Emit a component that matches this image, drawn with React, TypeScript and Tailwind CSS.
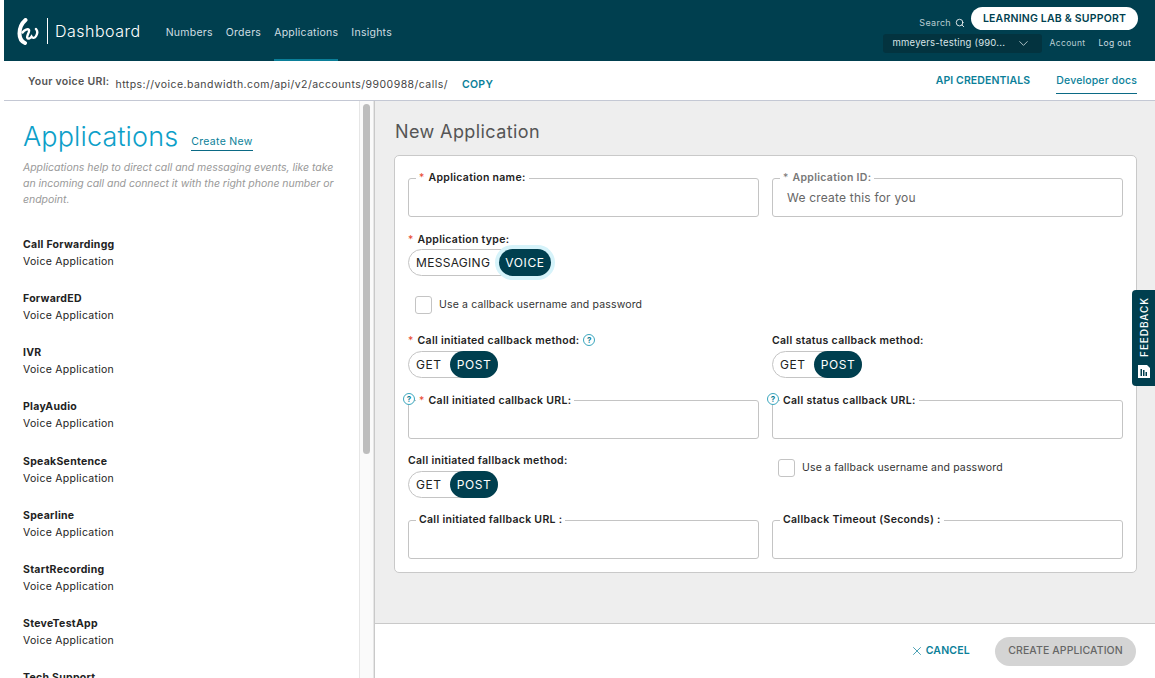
import { ChevronDown, Search, X } from "lucide-react";

const apps = [
  "Call Forwardingg",
  "ForwardED",
  "IVR",
  "PlayAudio",
  "SpeakSentence",
  "Spearline",
  "StartRecording",
  "SteveTestApp",
  "Tech Support",
];

function Logo() {
  return (
    <svg width="22" height="27" viewBox="0 0 22 27" fill="none" stroke="#fff" strokeLinecap="round">
      <path d="M8.500 2C4.500 5.500 2.500 10.500 2.500 15.500c0 5 2 8 5.500 9.500" strokeWidth="4" />
      <path d="M5.500 14.500c2-3 5.500-4 6.500-2.500 1 1.800-2.500 5.500-1.800 7.500.6 1.800 3 1.300 4.300-.8 1 1.800 3.300 1.600 4.600-.7 1.500-2.500 1.200-5.500-.1-7" strokeWidth="2.400" />
    </svg>
  );
}

function Help({ className }: { className?: string }) {
  return (
    <span
      className={`flex h-[12px] w-[12px] items-center justify-center rounded-full border border-[#3aa6bd] bg-white text-[8px] font-bold leading-none text-[#0b7f99] ${className ?? ""}`}
    >
      ?
    </span>
  );
}

function Req() {
  return <span className="mr-[4px] font-normal text-[#e8492f]">*</span>;
}

function Field({
  label,
  required,
  help,
  placeholder,
  muted,
}: {
  label: string;
  required?: boolean;
  help?: boolean;
  placeholder?: string;
  muted?: boolean;
}) {
  return (
    <div className="relative">
      {help && <Help className="absolute left-[-5px] top-0 z-10" />}
      <fieldset className="h-[46px] rounded-[3px] border border-[#c4c4c4] bg-white">
        <legend
          className={`ml-[7px] h-[14px] px-[3px] text-[10.5px] font-semibold leading-[14px] tracking-[0.3px] ${muted ? "text-[#777]" : "text-[#222]"} ${help ? "translate-y-px" : ""}`}
        >
          {required && (muted ? <span className="mr-[4px] font-normal text-[#777]">*</span> : <Req />)}
          {label}
        </legend>
        {placeholder && (
          <div className="px-[14px] pt-[5px] text-[12px] leading-[16px] tracking-[0.2px] text-[#666]">{placeholder}</div>
        )}
      </fieldset>
    </div>
  );
}

function Toggle({ left, right, wide }: { left: string; right: string; wide?: boolean }) {
  return (
    <div
      className={`flex h-[27px] items-center rounded-full border border-[#c4c4c4] bg-white text-[12px] ${wide ? "w-[143px] tracking-[0.3px]" : "w-[90px] tracking-[0.6px]"}`}
    >
      <span className={`pt-px pl-[7px] text-[#222] ${wide ? "w-[90px]" : "w-[41px]"}`}>{left}</span>
      <span
        className={`-my-px -mr-px flex h-[27px] flex-1 items-center justify-center rounded-full bg-[#003f4f] pt-px tracking-[0.6px] text-white ${wide ? "shadow-[0_0_0_4px_#d6f3fa]" : ""}`}
      >
        {right}
      </span>
    </div>
  );
}

function Check({ label }: { label: string }) {
  return (
    <label className="flex items-center gap-[7px] text-[10.5px] tracking-[0.15px] text-[#333]">
      <span className="h-[18px] w-[17px] rounded-[3px] border border-[#c4c4c4] bg-white" />
      {label}
    </label>
  );
}

function MethodLabel({ children }: { children: React.ReactNode }) {
  return <div className="h-[14px] text-[10.5px] font-semibold leading-[14px] tracking-[0.3px] text-[#222]">{children}</div>;
}

export default function App() {
  return (
    <div className="relative flex h-[678px] w-[1155px] flex-col overflow-hidden bg-white pl-[4px] font-['Inter',sans-serif]">
      <header className="flex h-[61px] shrink-0 bg-[#003f4f] text-white">
        <div className="flex items-center pl-[13px] pt-[1px]">
          <Logo />
          <div className="ml-[8px] h-[26px] w-px bg-white" />
          <span className="ml-[7px] text-[16px] font-light tracking-[0.5px]">Dashboard</span>
        </div>
        <nav className="ml-[25px] flex gap-[13px] text-[10.5px] tracking-[0.25px] text-[#cfdde1]">
          {["Numbers", "Orders", "Applications", "Insights"].map((n) => (
            <a
              key={n}
              className={`flex h-[61px] items-center border-b-2 pt-[7px] ${n === "Applications" ? "border-[#0b7f99]" : "border-transparent"}`}
            >
              {n}
            </a>
          ))}
        </nav>
        <div className="ml-auto flex flex-col items-end pr-[17px] pt-[7px]">
          <div className="flex items-start">
            <span className="mt-[10px] text-[9px] leading-[12px] tracking-[0.3px] text-[#b9cdd2]">Search</span>
            <Search size={10} className="ml-[4px] mt-[11px] text-white" />
            <button className="ml-[6px] h-[23px] w-[167px] rounded-full bg-white text-[10.5px] font-semibold tracking-[0.2px] text-[#003f4f]">
              LEARNING LAB &amp; SUPPORT
            </button>
          </div>
          <div className="mt-[4px] flex items-center">
            <div className="flex h-[19px] w-[159px] items-center justify-between rounded-[3px] bg-[#03333f] pl-[10px] pr-[11px] text-[9.5px] tracking-[0.2px] text-[#d8e4e7]">
              mmeyers-testing (990...
              <ChevronDown size={15} strokeWidth={1.25} />
            </div>
            <span className="ml-[8px] text-[8.500px] tracking-[0.35px] text-[#b9cdd2]">Account</span>
            <span className="ml-[13px] mr-[7px] text-[8.500px] tracking-[0.3px] text-[#cfdde1]">Log out</span>
          </div>
        </div>
      </header>

      <div className="flex h-[40px] shrink-0 items-start border-b border-[#c4c8d4] pl-[24px] pr-[18px] text-[#444]">
        <span className="mt-[14px] text-[10.5px] leading-[14px] font-semibold tracking-[0.3px] text-[#555]">Your voice URI:</span>
        <span className="ml-[6px] mt-[17px] text-[10.5px] leading-[14px] tracking-[0.46px]">https://voice.bandwidth.com/api/v2/accounts/9900988/calls/</span>
        <span className="ml-[14px] mt-[17px] text-[10.5px] leading-[14px] font-semibold tracking-[0.3px] text-[#0b7f99]">COPY</span>
        <span className="ml-auto mt-[13px] text-[10.5px] leading-[14px] font-semibold tracking-[0.1px] text-[#0b7f99]">API CREDENTIALS</span>
        <span className="ml-[26px] h-[33px] border-b border-[#0b6a85] pt-[13px] text-[10.5px] leading-[14px] font-medium tracking-[0.15px] text-[#0b7f99]">
          Developer docs
        </span>
      </div>

      <div className="flex min-h-0 flex-1">
        <aside className="w-[355px] shrink-0 overflow-hidden pl-[19px] pr-[20px]">
          <div className="flex items-baseline pt-[18px]">
            <h1 className="text-[27px] font-light leading-[36px] tracking-[0.13px] text-[#0d9fc9]">Applications</h1>
            <a className="ml-[13px] -translate-y-px border-b border-[#0b6a85] text-[10.5px] tracking-[0.3px] text-[#0b7f99]">Create New</a>
          </div>
          <p className="mt-[5px] text-[10.5px] italic leading-[16px] tracking-[-0.03px] text-[#999]">
            Applications help to direct call and messaging events, like take an incoming call and connect it with the right phone number or endpoint.
          </p>
          <ul className="mt-[28px]">
            {apps.map((a) => (
              <li key={a} className="h-[54.14px] text-[10.5px] leading-[17px] tracking-[0.28px] text-[#222]">
                <div className="font-bold">{a}</div>
                <div>Voice Application</div>
              </li>
            ))}
          </ul>
        </aside>

        <div className="w-[15px] shrink-0 border-x border-[#e6e6e6] bg-[#fafafa] px-[3px] pt-[3px]">
          <div className="h-[350px] rounded-full bg-[#bdbdbd]" />
        </div>

        <main className="flex min-w-0 flex-1 flex-col border-l border-[#c9c9c9] bg-[#eeeeee]">
          <div className="flex-1 pl-[19px] pr-[18px] pt-[18px]">
            <h2 className="ml-px h-[26px] text-[18px] font-normal leading-[26px] tracking-[0.4px] text-[#555]">New Application</h2>
            <section className="mt-[10px] h-[418px] rounded-[5px] border border-[#c9c9c9] bg-white px-[13px] pt-[15px]">
              <div className="grid grid-cols-2 gap-x-[13px]">
                <Field label="Application name:" required />
                <Field label="Application ID:" required muted placeholder="We create this for you" />
              </div>
              <div className="mt-[16px]">
                <MethodLabel>
                  <Req />
                  Application type:
                </MethodLabel>
                <div className="mt-[2px]">
                  <Toggle left="MESSAGING" right="VOICE" wide />
                </div>
              </div>
              <div className="ml-[7px] mt-[20px]">
                <Check label="Use a callback username and password" />
              </div>
              <div className="mt-[20px] grid grid-cols-2 gap-x-[13px]">
                <div>
                  <MethodLabel>
                    <span className="flex items-center">
                      <Req />
                      Call initiated callback method:
                      <Help className="ml-[4px] -translate-y-[1px]" />
                    </span>
                  </MethodLabel>
                  <div className="mt-[3px]">
                    <Toggle left="GET" right="POST" />
                  </div>
                </div>
                <div>
                  <MethodLabel>Call status callback method:</MethodLabel>
                  <div className="mt-[3px]">
                    <Toggle left="GET" right="POST" />
                  </div>
                </div>
              </div>
              <div className="mt-[15px] grid grid-cols-2 gap-x-[13px]">
                <Field label="Call initiated callback URL:" required help />
                <Field label="Call status callback URL:" help />
              </div>
              <div className="mt-[15px] grid grid-cols-2 gap-x-[13px]">
                <div>
                  <MethodLabel>Call initiated fallback method:</MethodLabel>
                  <div className="mt-[3px]">
                    <Toggle left="GET" right="POST" />
                  </div>
                </div>
                <div className="ml-[6px] pt-[5px]">
                  <Check label="Use a fallback username and password" />
                </div>
              </div>
              <div className="mt-[15px] grid grid-cols-2 gap-x-[13px]">
                <Field label="Call initiated fallback URL :" />
                <Field label="Callback Timeout (Seconds) :" />
              </div>
            </section>
          </div>
          <footer className="flex h-[55px] shrink-0 items-center justify-end border-t border-[#c9c9c9] bg-white pr-[19px]">
            <X size={14} strokeWidth={1.25} className="text-[#0b7f99]" />
            <span className="ml-[2px] text-[10.5px] font-semibold tracking-[0.2px] text-[#0b7f99]">CANCEL</span>
            <button className="ml-[25px] h-[29px] w-[141px] rounded-full bg-[#d4d4d4] text-[10.5px] font-medium tracking-[0.1px] text-[#666]">
              CREATE APPLICATION
            </button>
          </footer>
        </main>
      </div>

      <div className="absolute right-0 top-[290px] flex h-[96px] w-[23px] flex-col items-center justify-between rounded-l-[4px] bg-[#003f4f] pb-[8px] pt-[7px] text-white">
        <span className="rotate-180 text-[10px] font-medium leading-none tracking-[0.9px] [writing-mode:vertical-rl]">FEEDBACK</span>
        <svg width="12" height="13" viewBox="0 0 12 13">
          <path d="M0 0h9l3 3v10H0z" fill="#fff" />
          <path d="M2.500 4h1.500v7H2.500zM5 5h1.500v6H5zM7.500 7H9v4H7.500z" fill="#003f4f" />
        </svg>
      </div>
    </div>
  );
}
